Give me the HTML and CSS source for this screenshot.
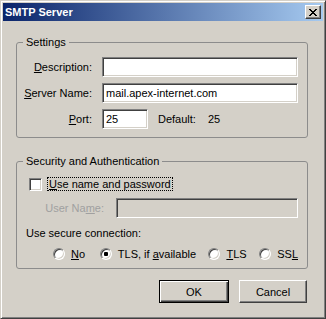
FILE: index.html
```html
<!DOCTYPE html>
<html lang="en">
<head>
    <meta charset="UTF-8">
    <title>SMTP Server</title>
    <link rel="stylesheet" href="styles.css">
</head>
<body>

    <div class="window">
        <div class="titlebar">
            <span class="title">SMTP Server</span>
            <button class="close-btn" type="button">
                <svg width="8" height="7" viewBox="0 0 8 7" shape-rendering="crispEdges">
                    <path d="M0 0h2v1h-2z M6 0h2v1h-2z M1 1h2v1h-2z M5 1h2v1h-2z M2 2h4v1h-4z M3 3h2v1h-2z M2 4h4v1h-4z M1 5h2v1h-2z M5 5h2v1h-2z M0 6h2v1h-2z M6 6h2v1h-2z" fill="#000"/>
                </svg>
            </button>
        </div>

        <div class="client">
            <!-- Beállítások -->
            <fieldset class="group group-settings">
                <legend>Settings</legend>
                <div class="form-grid">
                    <label class="lbl"><u>D</u>escription:</label>
                    <input class="field field-wide" type="text" value="">

                    <label class="lbl"><u>S</u>erver Name:</label>
                    <input class="field field-wide" type="text" value="mail.apex-internet.com">

                    <label class="lbl"><u>P</u>ort:</label>
                    <div class="port-row">
                        <input class="field field-port" type="text" value="25">
                        <span class="default-lbl">Default:</span>
                        <span>25</span>
                    </div>
                </div>
            </fieldset>

            <!-- Biztonság -->
            <fieldset class="group group-security">
                <legend>Security and Authentication</legend>

                <div class="check-row">
                    <input class="check" type="checkbox">
                    <span class="focus-lbl"><u>U</u>se name and password</span>
                </div>

                <div class="user-row">
                    <label class="lbl lbl-disabled">User Na<u>m</u>e:</label>
                    <input class="field field-user" type="text" disabled>
                </div>

                <div class="secure-lbl">Use secure connection:</div>

                <div class="radio-row">
                    <label class="radio-item item-no"><input class="radio" type="radio" name="sec"><span><u>N</u>o</span></label>
                    <label class="radio-item item-tlsa"><input class="radio" type="radio" name="sec" checked><span>TLS, if <u>a</u>vailable</span></label>
                    <label class="radio-item item-tls"><input class="radio" type="radio" name="sec"><span><u>T</u>LS</span></label>
                    <label class="radio-item"><input class="radio" type="radio" name="sec"><span>SS<u>L</u></span></label>
                </div>
            </fieldset>

            <div class="buttons">
                <button class="btn btn-ok" type="button">OK</button>
                <button class="btn btn-cancel" type="button">Cancel</button>
            </div>
        </div>
    </div>

</body>
</html>
```

FILE: styles.css
```css
body {
    margin: 0;
    padding: 0;
    background: #d4d0c8;
    font-family: 'Liberation Sans', Arial, sans-serif;
    font-size: 11px;
    color: #000;
}

.window {
    box-sizing: border-box;
    width: 326px;
    height: 319px;
    padding: 2px;
    background: #d4d0c8;
    border: 1px solid;
    border-color: #d4d0c8 #404040 #404040 #d4d0c8;
    box-shadow: inset 1px 1px 0 #fff, inset -1px -1px 0 #808080;
}

/* Címsor */
.titlebar {
    height: 18px;
    display: flex;
    align-items: center;
    justify-content: space-between;
    padding: 0 2px;
    background: linear-gradient(90deg, #0a246a, #a6caf0);
}

.title {
    color: #fff;
    font-weight: bold;
    font-size: 11px;
    line-height: 13px;
}

.close-btn {
    box-sizing: border-box;
    width: 16px;
    height: 14px;
    padding: 0;
    display: flex;
    align-items: center;
    justify-content: center;
    background: #d4d0c8;
    border: 1px solid;
    border-color: #fff #404040 #404040 #fff;
    box-shadow: inset -1px -1px 0 #808080;
}

.client {
    padding: 0 16px 0 13px;
}

/* Csoportdobozok */
.group {
    box-sizing: border-box;
    width: 292px;
    margin: 0;
    min-width: 0;
    border: 1px solid #8c8c8c;
    border-radius: 3px;
}

.group legend {
    padding: 0 3px;
    line-height: 13px;
}

.group-settings {
    margin-top: 15px;
    padding: 8px 9px 8px 6px;
}

.group-security {
    margin-top: 17px;
    padding: 9px 9px 8px 6px;
}

.form-grid {
    display: grid;
    grid-template-columns: 69px 196px;
    column-gap: 10px;
    row-gap: 6px;
    align-items: center;
}

.lbl {
    text-align: right;
    line-height: 13px;
}

.lbl-disabled {
    color: #a0a0a0;
}

/* Beviteli mezők */
.field {
    box-sizing: border-box;
    height: 20px;
    margin: 0;
    padding: 0 3px;
    font-family: inherit;
    font-size: 11px;
    color: #000;
    background: #fff;
    border: 1px solid;
    border-color: #808080 #fff #fff #808080;
    box-shadow: inset 1px 1px 0 #404040, inset -1px -1px 0 #d4d0c8;
    outline: none;
}

.field-wide {
    width: 196px;
}

.port-row {
    display: flex;
    align-items: center;
}

.field-port {
    width: 46px;
}

.default-lbl {
    width: 50px;
    margin-left: 10px;
}

.check-row {
    height: 14px;
    display: flex;
    align-items: center;
    margin-left: 6px;
}

.check {
    appearance: none;
    box-sizing: border-box;
    width: 13px;
    height: 13px;
    margin: 0;
    background: #fff;
    border: 1px solid;
    border-color: #808080 #fff #fff #808080;
    box-shadow: inset 1px 1px 0 #404040, inset -1px -1px 0 #d4d0c8;
}

.focus-lbl {
    margin-left: 5px;
    padding: 0 1px;
    line-height: 12px;
    border: 1px dotted #000;
}

.user-row {
    display: grid;
    grid-template-columns: 81px 182px;
    column-gap: 12px;
    align-items: center;
    margin-top: 7px;
}

.field-user {
    width: 182px;
    background: #d4d0c8;
}

.secure-lbl {
    margin: 9px 0 0 3px;
    line-height: 13px;
}

.radio-row {
    display: flex;
    align-items: center;
    height: 13px;
    margin: 7px 0 0 30px;
}

.radio-item {
    display: flex;
    align-items: center;
}

.item-no {
    width: 47px;
}

.item-tlsa {
    width: 109px;
}

.item-tls {
    width: 51px;
}

.radio {
    appearance: none;
    box-sizing: border-box;
    width: 12px;
    height: 12px;
    margin: 0 6px 0 0;
    border-radius: 50%;
    background: #fff;
    border: 1px solid;
    border-color: #808080 #fff #fff #808080;
    box-shadow: inset 1px 1px 0 #404040, inset -1px -1px 0 #d4d0c8;
}

.radio:checked {
    background: radial-gradient(circle, #000 0, #000 2px, #fff 2.5px);
}

/* Gombok */
.buttons {
    display: flex;
    justify-content: flex-end;
    gap: 10px;
    margin-top: 11px;
}

.btn {
    box-sizing: border-box;
    height: 23px;
    margin: 0;
    padding: 0;
    font-family: inherit;
    font-size: 11px;
    color: #000;
    background: #d4d0c8;
    border: 1px solid;
    border-color: #fff #404040 #404040 #fff;
    box-shadow: inset -1px -1px 0 #808080;
}

.btn-ok {
    width: 70px;
    border-color: #000;
    box-shadow: inset 1px 1px 0 #fff, inset -1px -1px 0 #404040, inset -2px -2px 0 #808080;
}

.btn-cancel {
    width: 68px;
}
```
